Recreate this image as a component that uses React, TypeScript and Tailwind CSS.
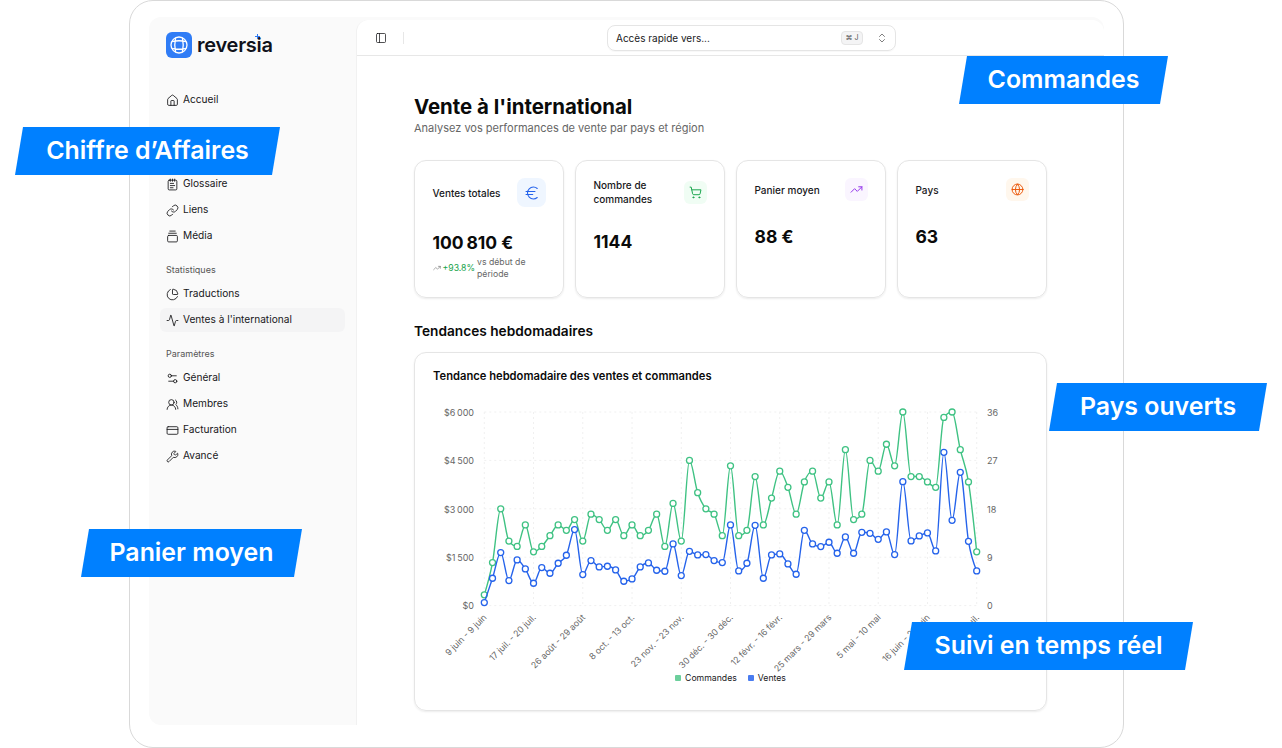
import React from 'react';
import {
  Activity,
  ChartPie,
  ChevronsUpDown,
  CreditCard,
  Euro,
  GalleryVerticalEnd,
  Globe,
  House,
  Link,
  NotepadText,
  PanelLeft,
  Settings2,
  ShoppingCart,
  TrendingUp,
  UsersRound,
  Wrench,
} from 'lucide-react';

const ORDERS = [2, 8, 18, 12, 11, 15, 10, 11, 13, 15, 14, 16, 12, 17, 16, 14, 16, 13, 15, 13, 14, 17, 11, 19, 12, 27, 21, 18, 17, 13, 26, 13, 14, 24, 15, 20, 25, 22, 17, 23, 25, 20, 23, 15, 29, 16, 17, 27, 25, 30, 26, 36, 24, 24, 23, 22, 35, 36, 29, 23, 10];
const SALES = [93, 847, 1642, 775, 1415, 1136, 692, 1178, 1002, 1312, 1560, 2355, 961, 1394, 1198, 1219, 1105, 754, 826, 1198, 1322, 1095, 1064, 1911, 930, 1683, 1570, 1580, 1394, 1332, 2499, 1074, 1312, 2489, 847, 1570, 1601, 1291, 971, 2334, 1911, 1828, 1963, 1622, 2127, 1622, 2272, 2241, 2055, 2282, 1580, 3842, 2003, 2158, 2251, 1694, 4750, 2644, 4131, 1993, 1074];
const TICKS = ['9 juin - 9 juin', '17 juil. - 20 juil.', '26 août - 29 août', '8 oct. - 13 oct.', '23 nov. - 23 nov.', '30 déc. - 30 déc.', '12 févr. - 16 févr.', '25 mars - 29 mars', '5 mai - 10 mai', '16 juin - 22 juin', '28 juil. - 30 juil.'];
const LEFT_AXIS = ['$0', '$1\u202f500', '$3\u202f000', '$4\u202f500', '$6\u202f000'];
const RIGHT_AXIS = ['0', '9', '18', '27', '36'];

const PLOT = { left: 51.3, right: 543.7, top: 12, bottom: 205.6 };
const xAt = (i: number) => PLOT.left + (i * (PLOT.right - PLOT.left)) / 60;
const yAt = (ratio: number) => PLOT.bottom - ratio * (PLOT.bottom - PLOT.top);

// same shape as a monotone line in a chart library
function monotonePath(points: [number, number][]) {
  const n = points.length;
  const t: number[] = new Array(n).fill(0);
  for (let i = 1; i < n - 1; i++) {
    const h0 = points[i][0] - points[i - 1][0];
    const h1 = points[i + 1][0] - points[i][0];
    const s0 = (points[i][1] - points[i - 1][1]) / h0;
    const s1 = (points[i + 1][1] - points[i][1]) / h1;
    const p = (s0 * h1 + s1 * h0) / (h0 + h1);
    t[i] = (Math.sign(s0) + Math.sign(s1)) * Math.min(Math.abs(s0), Math.abs(s1), 0.5 * Math.abs(p));
  }
  const h = points[1][0] - points[0][0];
  t[0] = ((3 * (points[1][1] - points[0][1])) / h - t[1]) / 2;
  t[n - 1] = ((3 * (points[n - 1][1] - points[n - 2][1])) / h - t[n - 2]) / 2;
  let d = `M${points[0][0]},${points[0][1]}`;
  for (let i = 1; i < n; i++) {
    const [x0, y0] = points[i - 1];
    const [x1, y1] = points[i];
    const dx = (x1 - x0) / 3;
    d += `C${x0 + dx},${y0 + dx * t[i - 1]},${x1 - dx},${y1 - dx * t[i]},${x1},${y1}`;
  }
  return d;
}

const Series: React.FC<{ points: [number, number][]; color: string }> = ({ points, color }) => (
  <g>
    <path d={monotonePath(points)} fill="none" stroke={color} strokeWidth={1.4} />
    {points.map(([x, y], i) => (
      <circle key={i} cx={x} cy={y} r={3} fill="#fff" stroke={color} strokeWidth={1.3} />
    ))}
  </g>
);

const TrendChart: React.FC = () => {
  const orders = ORDERS.map((v, i): [number, number] => [xAt(i), yAt(v / 36)]);
  const sales = SALES.map((v, i): [number, number] => [xAt(i), yAt(v / 6000)]);
  return (
    <svg width={596} height={272} className="mt-[16px] block overflow-visible">
      {[0, 1, 2, 3, 4].map(i => (
        <line key={i} x1={PLOT.left} x2={PLOT.right} y1={yAt(i / 4)} y2={yAt(i / 4)} stroke="#f0f0f0" strokeDasharray="2 3" />
      ))}
      {TICKS.map((_, i) => (
        <line key={i} x1={xAt(i * 6)} x2={xAt(i * 6)} y1={PLOT.top} y2={PLOT.bottom} stroke="#f0f0f0" strokeDasharray="2 3" />
      ))}
      {LEFT_AXIS.map((label, i) => (
        <text key={label} x={41} y={yAt(i / 4) + 3.7} textAnchor="end" fontSize={9} fill="#666">
          {label}
        </text>
      ))}
      {RIGHT_AXIS.map((label, i) => (
        <text key={label} x={554} y={yAt(i / 4) + 3.7} fontSize={9} fill="#666">
          {label}
        </text>
      ))}
      {TICKS.map((label, i) => (
        <text
          key={label}
          x={xAt(i * 6) + 3}
          y={218}
          textAnchor="end"
          fontSize={8.8}
          fill="#666"
          transform={`rotate(-45 ${xAt(i * 6) + 3} 218)`}
        >
          {label}
        </text>
      ))}
      <Series points={orders} color="#3fc283" />
      <Series points={sales} color="#2563eb" />
    </svg>
  );
};

const NavRow: React.FC<{ icon: React.ElementType; label: string; active?: boolean }> = ({ icon: Icon, label, active }) => (
  <div className={`mx-[11px] flex h-6 items-center gap-[4px] rounded-md px-[6px] text-[10.15px] text-[#18181b] ${active ? 'bg-[#f4f4f5]' : ''}`}>
    <Icon size={13} strokeWidth={1.6} />
    <span>{label}</span>
  </div>
);

const NavHeading: React.FC<{ label: string }> = ({ label }) => (
  <div className="mt-[14px] mb-[4px] flex h-4 items-center px-[17px] text-[9px] text-[#555]">{label}</div>
);

const Logo: React.FC = () => (
  <div className="flex items-center gap-[5px] pl-[17px]">
    <div className="flex h-[26px] w-[26px] items-center justify-center rounded-[6px] bg-[#2f7cf6]">
      <svg width={20} height={20} viewBox="0 0 20 20" fill="none" stroke="#fff" strokeWidth={1.3}>
        <circle cx={10} cy={10} r={8} />
        <path d="M6.6 2.8C5.6 7 5.6 13 6.6 17.2M13.4 2.8C14.4 7 14.4 13 13.4 17.2M2.8 6.6C7 5.6 13 5.6 17.2 6.6M2.8 13.4C7 14.4 13 14.4 17.2 13.4" />
      </svg>
    </div>
    <div className="relative text-[20px] leading-[26px] font-semibold tracking-[-0.25px] text-[#10121a]">
      reversia
      <svg width={5} height={5} viewBox="0 0 5 5" className="absolute top-[2px] left-[58px]">
        <path d="M2.5 0v5M0 2.5h5" stroke="#2f7cf6" strokeWidth={1} />
      </svg>
    </div>
  </div>
);

const Sidebar: React.FC = () => (
  <aside className="w-[207px] shrink-0 pt-[15px]">
    <Logo />
    <div className="mt-[30px]">
      <NavRow icon={House} label="Accueil" />
    </div>
    <div className="mt-[60px] flex flex-col gap-[2px]">
      <NavRow icon={NotepadText} label="Glossaire" />
      <NavRow icon={Link} label="Liens" />
      <NavRow icon={GalleryVerticalEnd} label="Média" />
    </div>
    <NavHeading label="Statistiques" />
    <div className="flex flex-col gap-[2px]">
      <NavRow icon={ChartPie} label="Traductions" />
      <NavRow icon={Activity} label="Ventes à l'international" active />
    </div>
    <NavHeading label="Paramètres" />
    <div className="flex flex-col gap-[2px]">
      <NavRow icon={Settings2} label="Général" />
      <NavRow icon={UsersRound} label="Membres" />
      <NavRow icon={CreditCard} label="Facturation" />
      <NavRow icon={Wrench} label="Avancé" />
    </div>
  </aside>
);

const TopBar: React.FC = () => (
  <header className="flex h-[36px] items-center border-b border-[#e7e7e7] pl-[18px]">
    <PanelLeft size={12} strokeWidth={1.5} className="text-[#18181b]" />
    <div className="ml-[16px] h-3 w-px bg-[#e7e7e7]" />
    <div className="mt-px ml-[203px] flex h-[26px] w-[289px] items-center rounded-lg border border-[#e5e5e5] pr-[7px] pl-[8px] shadow-[0_1px_1px_rgba(0,0,0,0.03)]">
      <span className="text-[10px] text-[#18181b]">Accès rapide vers...</span>
      <span className="ml-auto flex h-[14px] w-[22px] items-center justify-center rounded-[4px] border border-[#e5e5e5] bg-[#f4f4f5] text-[7px] text-[#555]">⌘ J</span>
      <ChevronsUpDown size={12} strokeWidth={1.5} className="ml-[13px] text-[#555]" />
    </div>
  </header>
);

const IconBox: React.FC<{ icon: React.ElementType; big?: boolean; bg: string; color: string }> = ({ icon: Icon, big, bg, color }) => (
  <div className={`flex shrink-0 items-center justify-center ${big ? 'h-[29px] w-[29px] rounded-lg' : 'h-[23px] w-[23px] rounded-md'} ${bg} ${color}`}>
    <Icon size={big ? 18 : 13} strokeWidth={big ? 1.4 : 1.8} />
  </div>
);

const StatCard: React.FC<{ title: React.ReactNode; value: string; icon: React.ElementType; big?: boolean; bg: string; color: string; children?: React.ReactNode }> = ({
  title,
  value,
  icon,
  big,
  bg,
  color,
  children,
}) => (
  <div className="h-[138px] w-[150px] rounded-xl border border-[#e5e5e5] pt-[17px] pr-[17px] pl-[17.5px] shadow-[0_1px_2px_rgba(0,0,0,0.08)]">
    <div className="flex items-center justify-between">
      <div className="text-[10px] leading-[14px] font-medium text-[#18181b]">{title}</div>
      <IconBox icon={icon} big={big} bg={bg} color={color} />
    </div>
    <div className="mt-[24px] text-[17.5px] leading-6 font-bold text-[#0a0a0a]">{value}</div>
    {children}
  </div>
);

const Banner: React.FC<{ label: string; className: string }> = ({ label, className }) => (
  <div className={`absolute flex h-12 items-center justify-center bg-[#0080ff] text-[24.9px] font-semibold text-white [clip-path:polygon(8px_0,100%_0,calc(100%-8px)_100%,0_100%)] ${className}`}>
    {label}
  </div>
);

const App: React.FC = () => {
  return (
    <div className="relative h-[748px] w-[1282px] overflow-hidden bg-white font-['Inter',sans-serif]">
      <div className="ml-[129px] h-[748px] w-[995px] rounded-3xl border border-[#d9d9d9] pt-[16px] pr-[19px] pb-[22px] pl-[19px]">
        <div className="flex h-full rounded-xl bg-[#fafafa]">
          <Sidebar />
          <main className="mt-[3px] flex-1 rounded-t-xl border-l border-[#f1f1f1] bg-white">
            <TopBar />
            <div className="pt-[37px] pr-[57px] pl-[57px]">
              <h1 className="text-[20.4px] leading-[27px] font-bold text-[#0a0a0a]">Vente à l'international</h1>
              <p className="text-[11px] leading-4 text-[#666]">Analysez vos performances de vente par pays et région</p>
              <div className="mt-6 flex gap-[11px]">
                <StatCard title="Ventes totales" value={'100\u202f810 €'} icon={Euro} big bg="bg-[#eff6ff]" color="text-[#2563eb]">
                  <div className="mt-[1px] flex items-center gap-[2px] text-[8.7px] leading-3">
                    <TrendingUp size={8} strokeWidth={1.5} className="shrink-0 text-[#555]" />
                    <span className="text-[#16a34a]">+93.8%</span>
                    <span className="text-[#666]">vs début de période</span>
                  </div>
                </StatCard>
                <StatCard title={<>Nombre de<br />commandes</>} value="1144" icon={ShoppingCart} bg="bg-[#f0fdf4]" color="text-[#16a34a]" />
                <StatCard title="Panier moyen" value="88 €" icon={TrendingUp} bg="bg-[#faf5ff]" color="text-[#9333ea]" />
                <StatCard title="Pays" value="63" icon={Globe} bg="bg-[#fff7ed]" color="text-[#ea580c]" />
              </div>
              <h2 className="mt-6 text-[13.7px] leading-[18px] font-semibold text-[#0a0a0a]">Tendances hebdomadaires</h2>
              <div className="mt-3 h-[359px] w-[633px] rounded-xl border border-[#e5e5e5] px-[18px] pt-[15px] shadow-[0_1px_2px_rgba(0,0,0,0.08)]">
                <div className="text-[11.2px] leading-4 font-semibold text-[#0a0a0a]">Tendance hebdomadaire des ventes et commandes</div>
                <TrendChart />
                <div className="flex items-center justify-center gap-[11px] text-[8.7px] leading-3 text-[#18181b]">
                  <span className="flex items-center gap-1">
                    <span className="h-[6px] w-[6px] rounded-[1px] bg-[#6ccf9c]" />
                    Commandes
                  </span>
                  <span className="flex items-center gap-1">
                    <span className="h-[6px] w-[6px] rounded-[1px] bg-[#4a7cf0]" />
                    Ventes
                  </span>
                </div>
              </div>
            </div>
          </main>
        </div>
      </div>
      <Banner label="Chiffre d’Affaires" className="top-[127px] left-[15px] w-[265px]" />
      <Banner label="Commandes" className="top-[56px] left-[959px] w-[209px]" />
      <Banner label="Pays ouverts" className="top-[383px] left-[1049px] w-[218px]" />
      <Banner label="Panier moyen" className="top-[529px] left-[81px] w-[221px]" />
      <Banner label="Suivi en temps réel" className="top-[622px] left-[904px] w-[289px]" />
    </div>
  );
};

export default App;
